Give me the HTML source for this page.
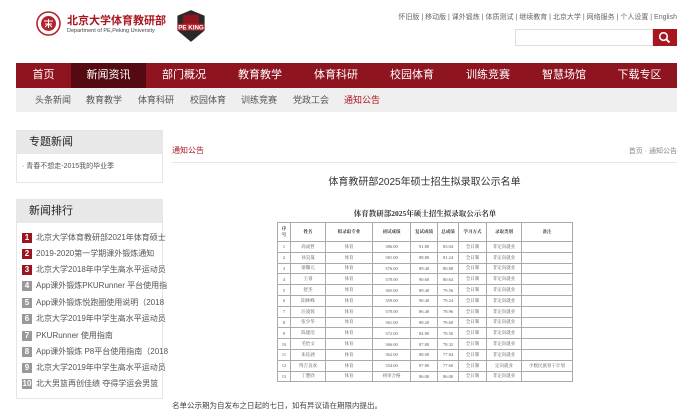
<!DOCTYPE html>
<html><head><meta charset="utf-8"><style>
*{margin:0;padding:0;box-sizing:border-box}
body{width:700px;height:420px;overflow:hidden;background:#fff;font-family:"Liberation Sans","Noto Sans CJK SC",sans-serif;color:#333;position:relative}
.a{position:absolute;white-space:nowrap}
.nav{position:absolute;left:16px;top:63px;width:661px;height:25px;background:#8e1420}
.nav span{position:absolute;top:0;height:25px;line-height:25px;color:#fff;font-size:11px;text-align:center}
.sub{position:absolute;left:16px;top:88px;width:661px;height:24px;background:#efefef}
.sub span{position:absolute;top:0;line-height:24px;font-size:9px;color:#555}
.box{position:absolute;left:16px;width:147px;border:1px solid #e6e6e6;background:#fff}
.box h3{height:23px;background:#e8e8e8;font-weight:normal;font-size:11px;line-height:23px;padding-left:12px;color:#222}
.rk{position:absolute;left:22px;font-size:8px;color:#555;line-height:11px}
.rk b{display:inline-block;width:10px;height:10px;background:#999;color:#fff;font-size:8px;text-align:center;line-height:10px;margin-right:4px;font-weight:bold}
.rk b.r{background:#9b1520}
table{position:absolute;left:277px;top:222px;width:296px;border-collapse:collapse;font-family:"Liberation Serif","Noto Serif CJK SC",serif;font-size:4.5px;color:#555}
td{border:0.7px solid #aaa;height:10.8px;text-align:center;padding:0}
tr.h td{height:19px;font-weight:bold;color:#333}
</style></head><body>
<svg class="a" style="left:36px;top:11px" width="25" height="25" viewBox="0 0 25 25"><circle cx="12.5" cy="12.5" r="11.5" fill="#fff" stroke="#b3232e" stroke-width="1.6"/><circle cx="12.5" cy="12.5" r="7.5" fill="#b3232e"/><path d="M8 10h9M9 13h7M12.5 8v9M9 16l3.5-3 3.5 3" stroke="#fff" stroke-width="1" fill="none"/></svg>
<div class="a" style="left:67px;top:12px;font-size:11px;font-weight:bold;color:#a8161f">北京大学体育教研部</div>
<div class="a" style="left:67px;top:28px;font-size:5.5px;color:#444">Department of PE,Peking University</div>
<svg class="a" style="left:172px;top:9px" width="38" height="34" viewBox="0 0 30 30"><path d="M15 1L27 6V19L15 29L3 19V6Z" fill="#2a2a2a"/><rect x="8" y="5" width="14" height="9" fill="#8e1420"/><rect x="3" y="13" width="24" height="6" fill="#b3232e"/><text x="15" y="18" font-size="5.5" font-weight="bold" fill="#fff" text-anchor="middle" font-family="Liberation Sans">PE KING</text></svg>
<div class="a" style="right:23px;top:12px;font-size:7px;color:#666">怀旧版 | 移动版 | 课外锻炼 | 体质测试 | 继续教育 | 北京大学 | 网络服务 | 个人设置 | English</div>
<div class="a" style="left:515px;top:29px;width:138px;height:17px;border:1px solid #ddd"></div>
<div class="a" style="left:653px;top:29px;width:24px;height:17px;background:#a8161f"></div>
<svg class="a" style="left:658px;top:31px" width="13" height="13" viewBox="0 0 13 13"><circle cx="5.5" cy="5.5" r="3.8" stroke="#fff" stroke-width="1.6" fill="none"/><path d="M8.3 8.3L11.5 11.5" stroke="#fff" stroke-width="2"/></svg>
<div class="nav">
<span style="left:0;width:55px">首页</span>
<span style="left:55px;width:75px;background:#540a10">新闻资讯</span>
<span style="left:130px;width:76px">部门概况</span>
<span style="left:206px;width:76px">教育教学</span>
<span style="left:282px;width:76px">体育科研</span>
<span style="left:358px;width:76px">校园体育</span>
<span style="left:434px;width:76px">训练竞赛</span>
<span style="left:510px;width:76px">智慧场馆</span>
<span style="left:586px;width:75px">下载专区</span>
</div>
<div class="sub">
<span style="left:19px">头条新闻</span><span style="left:70px">教育教学</span><span style="left:122px">体育科研</span><span style="left:174px">校园体育</span><span style="left:225px">训练竞赛</span><span style="left:277px">党政工会</span><span style="left:328px;color:#a8161f">通知公告</span>
</div>
<div class="box" style="top:130px;height:53px"><h3>专题新闻</h3><div style="font-size:7px;color:#555;padding:7px 0 0 5px">· 青春不想走-2015我的毕业季</div></div>
<div class="box" style="top:199px;height:200px"><h3>新闻排行</h3></div>
<div class="rk" style="top:232px"><b class="r">1</b>北京大学体育教研部2021年体育硕士</div>
<div class="rk" style="top:248px"><b class="r">2</b>2019-2020第一学期课外锻炼通知</div>
<div class="rk" style="top:264px"><b class="r">3</b>北京大学2018年中学生高水平运动员</div>
<div class="rk" style="top:280px"><b>4</b>App课外锻炼PKURunner 平台使用指</div>
<div class="rk" style="top:297px"><b>5</b>App课外锻炼悦跑圈使用说明（2018</div>
<div class="rk" style="top:313px"><b>6</b>北京大学2019年中学生高水平运动员</div>
<div class="rk" style="top:330px"><b>7</b>PKURunner 使用指南</div>
<div class="rk" style="top:346px"><b>8</b>App课外锻炼 P8平台使用指南（2018</div>
<div class="rk" style="top:362px"><b>9</b>北京大学2019年中学生高水平运动员</div>
<div class="rk" style="top:378px"><b>10</b>北大男篮再创佳绩 夺得学运会男篮</div>
<div class="a" style="left:172px;top:145px;font-size:8px;color:#a8161f">通知公告</div>
<div class="a" style="right:23px;top:146px;font-size:7px;color:#888">首页 · 通知公告</div>
<div class="a" style="left:172px;top:162px;width:505px;height:1px;background:#e6e6e6"></div>
<div class="a" style="left:172px;width:505px;top:173px;text-align:center;font-size:10px;color:#333">体育教研部2025年硕士招生拟录取公示名单</div>
<div class="a" style="left:277px;width:296px;top:208px;text-align:center;font-size:7.5px;font-weight:bold;font-family:'Liberation Serif','Noto Serif CJK SC',serif;color:#333">体育教研部2025年硕士招生拟录取公示名单</div>
<table>
<tr class="h"><td style="width:13px">序<br>号</td><td style="width:35px">姓名</td><td style="width:47px">拟录取专业</td><td style="width:38px">初试成绩</td><td style="width:27px">复试成绩</td><td style="width:21px">总成绩</td><td style="width:28px">学习方式</td><td style="width:35px">录取类别</td><td>备注</td></tr>
<tr><td>1</td><td>高成哲</td><td>体育</td><td>386.00</td><td>91.80</td><td>83.04</td><td>全日制</td><td>非定向就业</td><td></td></tr>
<tr><td>2</td><td>孙昊晟</td><td>体育</td><td>381.00</td><td>88.80</td><td>81.24</td><td>全日制</td><td>非定向就业</td><td></td></tr>
<tr><td>3</td><td>梁馨元</td><td>体育</td><td>376.00</td><td>89.40</td><td>80.88</td><td>全日制</td><td>非定向就业</td><td></td></tr>
<tr><td>4</td><td>王睿</td><td>体育</td><td>370.00</td><td>90.60</td><td>80.64</td><td>全日制</td><td>非定向就业</td><td></td></tr>
<tr><td>5</td><td>舒杰</td><td>体育</td><td>365.00</td><td>89.40</td><td>79.56</td><td>全日制</td><td>非定向就业</td><td></td></tr>
<tr><td>6</td><td>阳林峰</td><td>体育</td><td>359.00</td><td>90.40</td><td>79.24</td><td>全日制</td><td>非定向就业</td><td></td></tr>
<tr><td>7</td><td>汪凌蓉</td><td>体育</td><td>370.00</td><td>86.40</td><td>78.96</td><td>全日制</td><td>非定向就业</td><td></td></tr>
<tr><td>8</td><td>张少华</td><td>体育</td><td>361.00</td><td>88.20</td><td>78.60</td><td>全日制</td><td>非定向就业</td><td></td></tr>
<tr><td>9</td><td>陈建浩</td><td>体育</td><td>372.00</td><td>84.80</td><td>78.56</td><td>全日制</td><td>非定向就业</td><td></td></tr>
<tr><td>10</td><td>毛怡文</td><td>体育</td><td>366.00</td><td>87.80</td><td>78.32</td><td>全日制</td><td>非定向就业</td><td></td></tr>
<tr><td>11</td><td>朱钰涵</td><td>体育</td><td>362.00</td><td>88.00</td><td>77.84</td><td>全日制</td><td>非定向就业</td><td></td></tr>
<tr><td>12</td><td>得吉良欢</td><td>体育</td><td>354.00</td><td>87.80</td><td>77.60</td><td>全日制</td><td>定向就业</td><td>少数民族骨干计划</td></tr>
<tr><td>13</td><td>丁楚欣</td><td>体育</td><td>初审合格</td><td>86.00</td><td>86.00</td><td>全日制</td><td>非定向就业</td><td></td></tr>
</table>
<div class="a" style="left:172px;top:400px;font-size:7.5px;color:#444">名单公示期为自发布之日起的七日，如有异议请在期限内提出。</div>
</body></html>
